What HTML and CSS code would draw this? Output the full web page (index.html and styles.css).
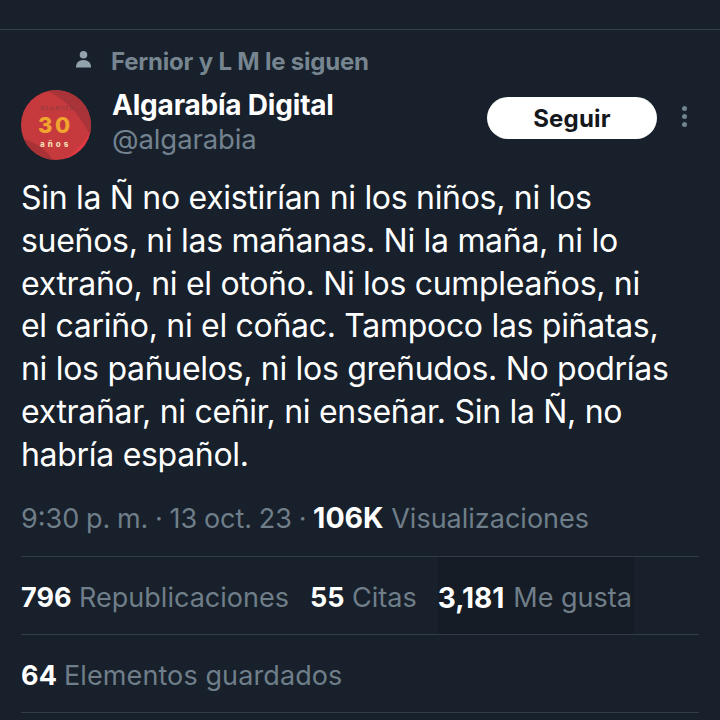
FILE: index.html
```html
<!DOCTYPE html>
<html lang="es">
<head>
<meta charset="utf-8">
<title>Algarabía Digital</title>
<link rel="stylesheet" href="styles.css">
</head>
<body>
<main class="tweet">
  <div class="social">
    <svg class="person" viewBox="0 0 18 18" aria-hidden="true"><circle cx="9" cy="4.500" r="4"/><path d="M1 18c0-5 3-8 8-8s8 3 8 8z"/></svg>
    <span>Fernior y L M le siguen</span>
  </div>
  <header class="author">
    <svg class="avatar" viewBox="0 0 70 70" aria-hidden="true">
      <defs><clipPath id="c"><circle cx="35" cy="35" r="35"/></clipPath></defs>
      <g clip-path="url(#c)">
        <rect width="70" height="70" fill="#c63a3e"/>
        <path d="M35 0A35 35 0 0 1 70 35V46C60 28 48 10 24 0z" fill="#a83338"/>
        <path d="M0 48C14 52 26 60 32 70H0z" fill="#a93237"/>
        <path d="M42 70C54 62 64 52 70 40V70z" fill="#de3a44"/>
        <text class="av-top" x="19" y="20">aLuenta</text>
        <text class="av-num" x="17" y="43">30</text>
        <text class="av-low" x="19" y="56.500">años</text>
      </g>
    </svg>
    <div class="names">
      <div class="name">Algarabía Digital</div>
      <div class="handle">@algarabia</div>
    </div>
    <button class="follow">Seguir</button>
    <div class="more" aria-hidden="true"><i></i><i></i><i></i></div>
  </header>
  <p class="body">Sin la Ñ no existirían ni los niños, ni los<br>sueños, ni las mañanas. Ni la maña, ni lo<br>extraño, ni el otoño. Ni los cumpleaños, ni<br>el cariño, ni el coñac. Tampoco las piñatas,<br>ni los pañuelos, ni los greñudos. No podrías<br>extrañar, ni ceñir, ni enseñar. Sin la Ñ, no<br>habría español.</p>
  <div class="row meta"><span class="date">9:30 p. m. · 13 oct. 23 · </span><b>106K</b> Visualizaciones</div>
  <div class="row stats">
    <span><b>796</b> Republicaciones</span>
    <span><b>55</b> Citas</span>
    <span class="likes"><b>3,181</b> Me gusta</span>
  </div>
  <div class="row saved"><b>64</b> Elementos guardados</div>
</main>
</body>
</html>
```
FILE: styles.css
```css
* { box-sizing: border-box; }
html, body { margin: 0; height: 100%; }
body {
  background: #17202b;
  color: #fff;
  font-family: Inter, Roboto, sans-serif;
  overflow: hidden;
}
.tweet {
  margin-top: 29px;
  border-top: 1px solid #333f4c;
  padding: 0 21px;
  height: 691px;
}
.social {
  display: flex;
  align-items: center;
  gap: 19px;
  padding: 16px 0 0 54px;
  height: 47px;
  font-size: 24px;
  font-weight: 700;
  letter-spacing: -.2px;
  color: #76858f;
}
.person { width: 17px; height: 18px; fill: #93a3ae; margin-top: -6px; }
.author { display: flex; align-items: flex-start; height: 90px; }
.avatar { width: 70px; height: 70px; margin-top: 13px; flex: none; }
.av-top { font: 400 8px Roboto, sans-serif; fill: #8f3a3c; letter-spacing: .8px; }
.av-num { font: 800 22px Inter, sans-serif; fill: #efa52e; letter-spacing: 2.500px; }
.av-low { font: 800 8px Inter, sans-serif; fill: #f6dcb0; letter-spacing: 3px; }
.names { margin-left: 21px; flex: 1; }
.name { font-size: 28px; font-weight: 700; line-height: 33px; margin-top: 12px; letter-spacing: -.2px; }
.handle { font-size: 27.500px; line-height: 35px; color: #73828f; letter-spacing: -.1px; }
.follow {
  width: 170px; height: 42px;
  margin-top: 20px;
  border: 0;
  border-radius: 21px;
  background: #fff;
  color: #14181c;
  font: 700 24px Inter, sans-serif;
  letter-spacing: .2px;
  padding: 0;
}
.more { display: flex; flex-direction: column; gap: 3px; margin: 29px 12px 0 25px; width: 5px; flex: none; }
.more i { width: 5px; height: 5px; border-radius: 50%; background: #73828f; }
.body {
  margin: 0;
  height: 312px;
  padding-top: 10px;
  font-size: 32px;
  line-height: 42.800px;
  letter-spacing: -.3px;
}
.row { display: flex; align-items: center; gap: 10px; font-size: 27px; color: #6f7e89; }
.row b { color: #fff; font-weight: 700; }
.meta { display: block; height: 78px; padding-top: 19px; line-height: 40px; border-bottom: 1px solid #323d49; }
.meta b { font-size: 28.500px; }
.date { word-spacing: -.900px; }
.stats { height: 78px; gap: 21px; padding-top: 4px; border-bottom: 1px solid #323d49; }
.likes { background: #151c25; align-self: stretch; display: flex; align-items: center; gap: 9px; margin-top: -4px; padding: 4px 2px 0 0; }
.likes b { font-size: 28px; }
.saved { height: 78px; padding-top: 4px; gap: 7px; letter-spacing: .1px; border-bottom: 1px solid #323d49; }
```
